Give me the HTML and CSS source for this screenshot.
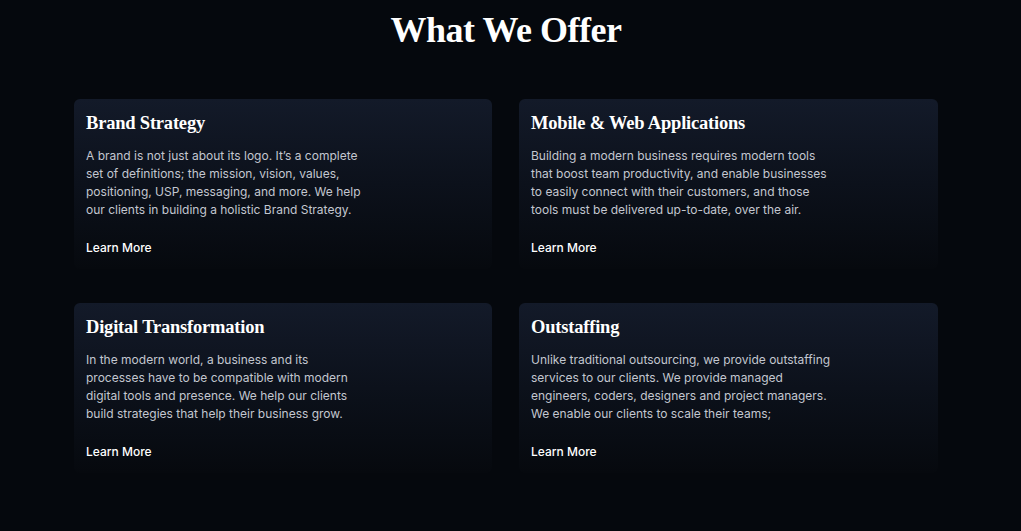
FILE: index.html
```html
<!DOCTYPE html>
<html lang="en">
<head>
<meta charset="utf-8">
<title>What We Offer</title>
<link rel="stylesheet" href="styles.css">
</head>
<body>
<section class="offer">
  <h1 class="offer-title">What We Offer</h1>
  <div class="offer-grid">
    <article class="card">
      <h2 class="card-title">Brand Strategy</h2>
      <p class="card-text">A brand is not just about its logo. It’s a complete<br>set of definitions; the mission, vision, values,<br>positioning, USP, messaging, and more. We help<br>our clients in building a holistic Brand Strategy.</p>
      <a class="card-link" href="#">Learn More</a>
    </article>
    <article class="card">
      <h2 class="card-title">Mobile &amp; Web Applications</h2>
      <p class="card-text">Building a modern business requires modern tools<br>that boost team productivity, and enable businesses<br>to easily connect with their customers, and those<br>tools must be delivered up-to-date, over the air.</p>
      <a class="card-link" href="#">Learn More</a>
    </article>
    <article class="card">
      <h2 class="card-title">Digital Transformation</h2>
      <p class="card-text">In the modern world, a business and its<br>processes have to be compatible with modern<br>digital tools and presence. We help our clients<br>build strategies that help their business grow.</p>
      <a class="card-link" href="#">Learn More</a>
    </article>
    <article class="card">
      <h2 class="card-title">Outstaffing</h2>
      <p class="card-text">Unlike traditional outsourcing, we provide outstaffing<br>services to our clients. We provide managed<br>engineers, coders, designers and project managers.<br>We enable our clients to scale their teams;</p>
      <a class="card-link" href="#">Learn More</a>
    </article>
  </div>
</section>
</body>
</html>
```
FILE: styles.css
```css
html, body {
  margin: 0;
  padding: 0;
  background: #05080d;
}
body {
  font-family: Inter, "Noto Sans", sans-serif;
  color: #ffffff;
  min-height: 531px;
}
.offer {
  width: 864px;
  margin-left: 74px;
  padding-top: 6px;
}
.offer-title {
  margin: 0;
  text-align: center;
  font-family: "Liberation Serif", "DejaVu Serif", serif;
  font-weight: 700;
  font-size: 36px;
  line-height: 48px;
  letter-spacing: -0.5px;
  color: #ffffff;
}
.offer-grid {
  display: grid;
  grid-template-columns: 418px 419px;
  column-gap: 27px;
  row-gap: 34px;
  margin-top: 45px;
}
.card {
  height: 170px;
  box-sizing: border-box;
  padding: 12px 12px 0 12px;
  border-radius: 6px;
  background: linear-gradient(180deg, #131a29 0%, #0c111b 50%, #06090e 100%);
  display: flex;
  flex-direction: column;
  align-items: flex-start;
}
.card-title {
  margin: 0;
  font-family: "Liberation Serif", "DejaVu Serif", serif;
  font-weight: 700;
  font-size: 18.5px;
  line-height: 24px;
  letter-spacing: -0.2px;
  color: #ffffff;
}
.card-text {
  margin: 12px 0 0 0;
  font-size: 12px;
  line-height: 18px;
  color: #c3c7d0;
}
.card-link {
  margin-top: 20px;
  font-size: 12px;
  line-height: 18px;
  font-weight: 500;
  color: #ffffff;
  text-decoration: none;
}
```
